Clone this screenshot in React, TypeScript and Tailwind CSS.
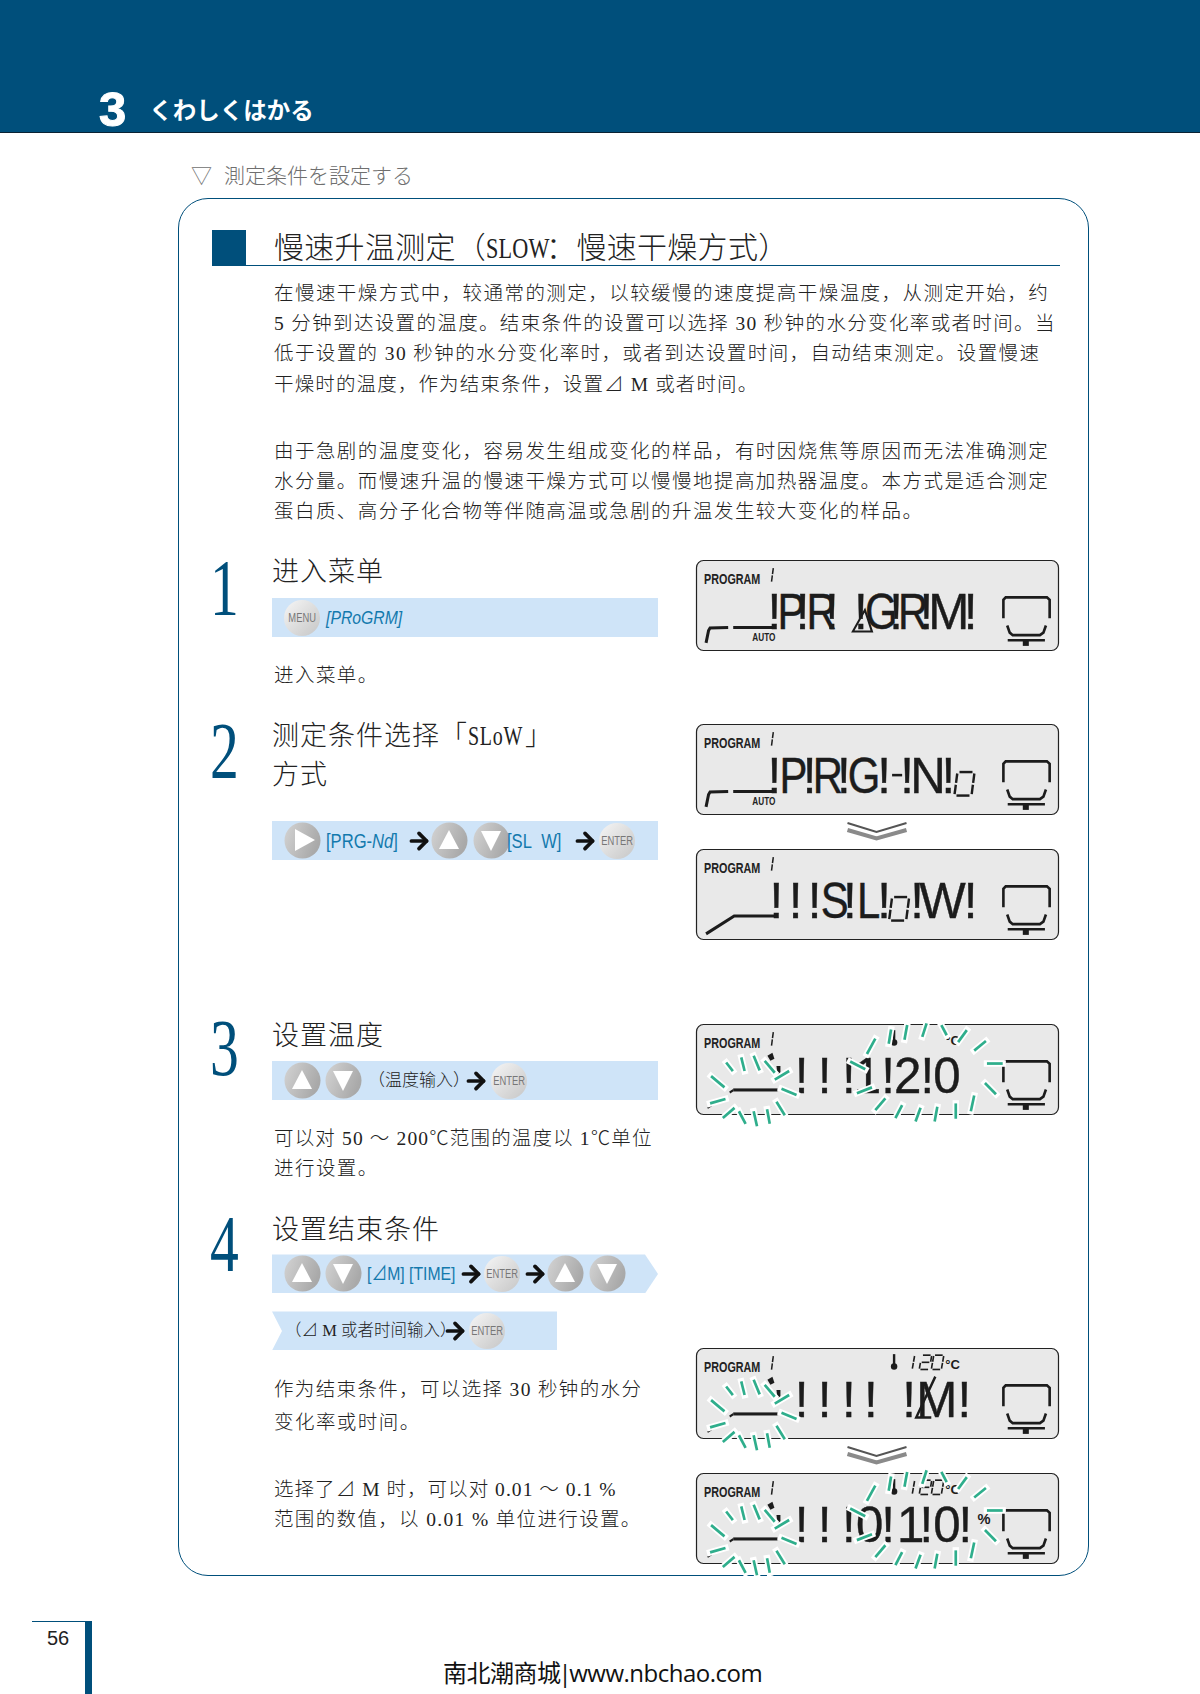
import type { ReactNode } from 'react'
import { ArrowRight } from 'lucide-react'

const SERIF = "[font-family:'Liberation_Serif','Noto_Sans_CJK_SC',serif]"
const SANS = "[font-family:'Liberation_Sans','Noto_Sans_CJK_SC',sans-serif]"

// lines holding latin text run a little tighter, latin is half width in the print
type Line = { t: string; c?: string }

const INTRO_1: Line[] = [
  { t: '在慢速干燥方式中，较通常的测定，以较缓慢的速度提高干燥温度，从测定开始，约' },
  { t: '5 分钟到达设置的温度。结束条件的设置可以选择 30 秒钟的水分变化率或者时间。当', c: 'tracking-[1.35px]' },
  { t: '低于设置的 30 秒钟的水分变化率时，或者到达设置时间，自动结束测定。设置慢速', c: 'tracking-[1.4px]' },
  { t: '干燥时的温度，作为结束条件，设置⊿ M 或者时间。', c: 'tracking-[1.13px]' },
]
const INTRO_2: Line[] = [
  { t: '由于急剧的温度变化，容易发生组成变化的样品，有时因烧焦等原因而无法准确测定' },
  { t: '水分量。而慢速升温的慢速干燥方式可以慢慢地提高加热器温度。本方式是适合测定' },
  { t: '蛋白质、高分子化合物等伴随高温或急剧的升温发生较大变化的样品。' },
]

// tick marks of the flashing areas, in 3x zoom units relative to the lcd box
const BURST_LEFT = [
  [45, 153, 85, 186], [90, 113, 110, 138], [135, 98, 145, 138], [172, 93, 190, 136], [205, 108, 235, 143],
  [235, 163, 278, 138], [255, 190, 300, 208], [240, 228, 265, 268], [212, 250, 220, 293], [172, 256, 182, 300],
  [128, 256, 148, 293], [80, 276, 115, 246], [42, 233, 88, 220],
]
const BURST_RIGHT = [
  [510, 88, 535, 43], [575, 58, 582, 16], [622, 46, 630, 3], [675, 38, 688, -2], [732, 3, 748, 33],
  [782, 53, 808, 18], [830, 78, 865, 50], [868, 116, 915, 116], [862, 173, 895, 206], [820, 256, 830, 210],
  [775, 233, 775, 278], [712, 286, 720, 243], [655, 286, 670, 246], [595, 276, 615, 238], [535, 253, 565, 218],
  [480, 203, 525, 186], [505, 133, 460, 110],
]

function Seg({ x, y, w, h, sk = 2.5, on, sw = 1.6 }: { x: number; y: number; w: number; h: number; sk?: number; on: string; sw?: number }) {
  const p = (u: number, v: number) => [x + u * w + (1 - v) * sk, y + v * h]
  const defs: Record<string, number[]> = {
    a: [0.12, 0, 0.88, 0],
    b: [1, 0.06, 1, 0.46],
    c: [1, 0.54, 1, 0.94],
    d: [0.12, 1, 0.88, 1],
    e: [0, 0.54, 0, 0.94],
    f: [0, 0.06, 0, 0.46],
    g: [0.12, 0.5, 0.88, 0.5],
  }
  return (
    <g stroke="#1c1c1c" strokeWidth={sw}>
      {on.split('').map(s => {
        const d = defs[s]
        const [x1, y1] = p(d[0], d[1])
        const [x2, y2] = p(d[2], d[3])
        return <line key={s} x1={x1} y1={y1} x2={x2} y2={y2} />
      })}
    </g>
  )
}

function Burst({ ticks, dy = 0 }: { ticks: number[][]; dy?: number }) {
  return (
    <g transform={`translate(0 ${dy}) scale(${1 / 3})`}>
      {ticks.map((t, i) => (
        <line key={`h${i}`} x1={t[0]} y1={t[1]} x2={t[2]} y2={t[3]} stroke="#fff" strokeWidth={19} strokeLinecap="square" />
      ))}
      {ticks.map((t, i) => (
        <line key={`t${i}`} x1={t[0]} y1={t[1]} x2={t[2]} y2={t[3]} stroke="#2fae8c" strokeWidth={8} />
      ))}
    </g>
  )
}

function Lcd({
  dots,
  letters,
  ramp,
  auto,
  children,
}: {
  dots: number[]
  letters: [string, number][]
  ramp: 'steps' | 'slope' | 'flash'
  auto?: boolean
  children?: ReactNode
}) {
  return (
    <svg width={363} height={91} viewBox="0 0 361 89" preserveAspectRatio="none" className={`block overflow-visible ${SANS}`}>
      <rect x={0.5} y={0.5} width={360} height={88} rx={7} fill="#e9e9e9" stroke="#222" strokeWidth={1.2} />
      <text x={8} y={23} fontSize={14} fontWeight={700} fill="#222" textLength={56} lengthAdjust="spacingAndGlyphs">
        PROGRAM
      </text>
      <Seg x={75} y={7} w={0} h={15} sk={2} on="bc" sw={1.5} />
      {auto && (
        <text x={56} y={79} fontSize={11} fontWeight={700} fill="#222" textLength={23} lengthAdjust="spacingAndGlyphs">
          AUTO
        </text>
      )}
      {ramp === 'steps' && (
        <g stroke="#1c1c1c" strokeWidth={3} fill="none">
          <path d="M10 81 L12.5 69 L14 66.5 L32 66" />
          <line x1={37} y1={66} x2={78} y2={66} />
        </g>
      )}
      {ramp === 'slope' && (
        <path d="M10 83 L38 65.5 L78 65.5" stroke="#1c1c1c" strokeWidth={3} fill="none" />
      )}
      {ramp === 'flash' && (
        <g fill="#1c1c1c">
          <rect x={37} y={63} width={44} height={3} />
          <path d="M33 66 L37 63.5 L37 66 L34 68 Z" />
          <path d="M11 82 L17 78 L18 79 L12 83 Z" />
          <path d="M71 31 L76 28 L78 34 L74 36 Z" />
          <path d="M80 41 L84 41 L84 50 L81 50 Z" />
        </g>
      )}
      <g fill="#1c1c1c" stroke="#1c1c1c" strokeWidth={0.4} fontSize={49}>
        {dots.map(x => (
          <text key={`d${x}`} x={x} y={67} textAnchor="middle">
            !
          </text>
        ))}
        {letters.map(([c, x]) => (
          <text key={`${c}${x}`} transform={`translate(${x} 67) scale(${'PRGSL'.includes(c) ? 0.85 : 1} 1)`}>
            {c}
          </text>
        ))}
      </g>
      <g stroke="#1c1c1c" strokeWidth={2.6} fill="none">
        <path d="M305.7 57 L305.7 39 L308 36.5 L349 36.5 L351.7 39 L351.7 57" />
        <path d="M309.5 64 L312 71 L315 73.5 L342 73.5 L345.5 71 L348 64" />
        <line x1={310} y1={78.5} x2={347} y2={78.5} />
      </g>
      <rect x={325} y={79} width={6} height={5} fill="#1c1c1c" />
      {children}
    </svg>
  )
}

function Temp({ digits = true }: { digits?: boolean }) {
  return (
    <g>
      <line x1={197} y1={6} x2={197} y2={17} stroke="#1c1c1c" strokeWidth={2.4} />
      <circle cx={197} cy={18} r={3.2} fill="#1c1c1c" />
      {digits && (
        <>
          <Seg x={215} y={7} w={0} h={14} sk={2.5} on="bc" />
          <Seg x={222} y={7} w={10} h={14} sk={2.5} on="abged" />
          <Seg x={234} y={7} w={10} h={14} sk={2.5} on="abcdef" />
        </>
      )}
      <text x={248} y={21} fontSize={13} fontWeight={700} fill="#1c1c1c">
        °C
      </text>
    </g>
  )
}

function Chevron() {
  return (
    <svg width={62} height={20} viewBox="0 0 61 20" className="block">
      <path d="M1 1 L30 10 L60 1" stroke="#555" strokeWidth={2} fill="none" />
      <path d="M1 8 L30 16.5 L60 8" stroke="#8a8a8a" strokeWidth={4} fill="none" />
    </svg>
  )
}

function TriButton({ dir }: { dir: 'up' | 'down' | 'right' }) {
  const pts = dir === 'up' ? '18,8 28,27 8,27' : dir === 'down' ? '8,9 28,9 18,29' : '11,7 31,18 11,29'
  return (
    <svg width={37} height={37} viewBox="0 0 37 37" className="block shrink-0 overflow-visible">
      <defs>
        <linearGradient id={`tb-${dir}`} x1="0" y1="0" x2="1" y2="0.4">
          <stop offset="0" stopColor="#d4d4d4" />
          <stop offset="1" stopColor="#a9a9a9" />
        </linearGradient>
      </defs>
      <circle cx={18.5} cy={18.5} r={18} fill={`url(#tb-${dir})`} />
      <polygon points={pts} fill="#fff" />
    </svg>
  )
}

function LabelButton({ label }: { label: string }) {
  return (
    <span className={`flex h-[36px] w-[36px] shrink-0 items-center justify-center rounded-full bg-linear-to-br from-[#f6f6f6] to-[#c6c6c6] text-[13px] text-[#777] ${SANS}`}>
      <span className="inline-block scale-x-[0.72]">{label}</span>
    </span>
  )
}

function Arrow() {
  return <ArrowRight size={26} strokeWidth={3.4} className="-mx-[3px] shrink-0 text-[#111]" />
}

function Bar({ children, className = '' }: { children: ReactNode; className?: string }) {
  return <div className={`flex h-[39px] items-center bg-[#cfe4f8] pl-[12px] ${className}`}>{children}</div>
}

function KeyText({ children, className = '', size = 'text-[19px]' }: { children: ReactNode; className?: string; size?: string }) {
  return (
    <span className={`shrink-0 whitespace-nowrap text-[#1379ad] ${size} ${SANS} ${className}`}>
      <span className="inline-block origin-left scale-x-[0.83]">{children}</span>
    </span>
  )
}

// latin letters in the print are half width, squeezed into a fixed box
function Narrow({ children, className }: { children: ReactNode; className: string }) {
  return (
    <span className={`inline-block whitespace-nowrap ${className}`}>
      <span className="inline-block origin-left scale-x-[0.74]">{children}</span>
    </span>
  )
}

function Step({
  num,
  numClass,
  rowClass,
  titleClass,
  title,
  left,
  right,
  rightClass,
}: {
  num: string
  numClass: string
  rowClass: string
  titleClass: string
  title: ReactNode[]
  left: ReactNode
  right?: ReactNode
  rightClass: string
}) {
  return (
    <div className={`flex ${rowClass}`}>
      <div className="ml-[31px] w-[62px] shrink-0">
        <div className={`origin-top-left scale-x-[0.72] text-[80px] leading-[80px] text-[#004f7b] ${SERIF} ${numClass}`}>{num}</div>
      </div>
      <div className="w-[386px] shrink-0">
        <div className={titleClass}>
          {title.map((t, i) => (
            <div key={i} className={`whitespace-nowrap text-[27px] leading-[39px] font-light tracking-[1px] text-[#222] ${SERIF}`}>
              {t}
            </div>
          ))}
        </div>
        {left}
      </div>
      <div className={`ml-[38px] w-[361px] shrink-0 ${rightClass}`}>{right}</div>
    </div>
  )
}

function Copy({ lines, leading = 'leading-[30px]', className = '' }: { lines: Line[]; leading?: string; className?: string }) {
  return (
    <div className={`ml-[2px] text-[19.5px] font-light text-[#222] ${leading} ${SERIF} ${className}`}>
      {lines.map(l => (
        <div key={l.t} className={`whitespace-nowrap ${l.c ?? 'tracking-[1.45px]'}`}>
          {l.t}
        </div>
      ))}
    </div>
  )
}

export default function App() {
  return (
    <div className="h-[1694px] w-[1200px] overflow-hidden bg-white">
      {/* chapter band */}
      <div className="flex h-[133px] items-end border-b border-[#0b2233] bg-[#004f7b] pb-[1px] pl-[99px] text-white">
        <span className={`text-[49px] leading-[44px] font-bold [-webkit-text-stroke:1px_white] ${SANS}`}>3</span>
        <span className="mb-[7px] ml-[23px] text-[23.5px] leading-[30px] font-bold [font-family:'Noto_Sans_CJK_JP',sans-serif]">
          くわしくはかる
        </span>
      </div>

      <div className="ml-[191px] mt-[27px] flex h-[30px] items-center text-[21px] font-light text-[#6f6f6f] [font-family:'Noto_Sans_CJK_JP',sans-serif]">
        <span className="w-[33px]">▽</span>
        <span>測定条件を設定する</span>
      </div>

      <div className="ml-[178px] mt-[8px] h-[1378px] w-[911px] rounded-[30px] border border-[#004f7b] pt-[31px]">
        <div className="ml-[33px] flex h-[36px] w-[848px] items-center border-b border-[#004f7b]">
          <div className="h-[35px] w-[34px] bg-[#004f7b]" />
          <div className={`ml-[28px] whitespace-nowrap text-[30px] font-light tracking-[0.3px] text-[#222] ${SERIF}`}>
            慢速升温测定（<Narrow className="w-[60px]">SLOW</Narrow>：慢速干燥方式）
          </div>
        </div>

        <div className="ml-[93px] mt-[13px]">
          <Copy lines={INTRO_1} leading="leading-[30.2px]" />
          <Copy lines={INTRO_2} className="mt-[37px]" leading="leading-[30.2px]" />
        </div>

        <div className="mt-[24px]">
          <Step
            num="1"
            numClass="-mt-[3px]"
            rowClass="h-[164px]"
            titleClass="pt-[2px]"
            rightClass="pt-[9px]"
            title={['进入菜单']}
            left={
              <>
                <Bar className="mt-[6px]">
                  <LabelButton label="MENU" />
                  <KeyText className="ml-[6px] italic font-light">[PRoGRM]</KeyText>
                </Bar>
                <Copy lines={[{ t: '进入菜单。' }]} className="mt-[24px]" />
              </>
            }
            right={
              <Lcd
                ramp="steps"
                auto
                dots={[78, 106, 135, 164, 199, 229, 273]}
                letters={[['P', 81], ['R', 110], ['G', 168], ['R', 201], ['M', 231]]}
              >
                <polygon points="168,49 156,70 175,70" fill="none" stroke="#1c1c1c" strokeWidth={2} />
              </Lcd>
            }
          />
          <Step
            num="2"
            numClass="-mt-[4px]"
            rowClass="h-[301px]"
            titleClass="pt-[2px]"
            rightClass="pt-[9px]"
            title={[
              <>
                测定条件选择「<Narrow className="w-[57px]">SLoW</Narrow>」
              </>,
              '方式',
            ]}
            left={
              <Bar className="mt-[26px]">
                <TriButton dir="right" />
                <KeyText size="text-[20px]" className="ml-[5px] w-[74px]">
                  [PRG-<span className="italic font-light">Nd</span>]
                </KeyText>
                <span className="ml-[9px]">
                  <Arrow />
                </span>
                <span className="ml-[2px]">
                  <TriButton dir="up" />
                </span>
                <span className="ml-[5px]">
                  <TriButton dir="down" />
                </span>
                <KeyText size="text-[20px]" className="-ml-[3px] w-[68px]">[SL&nbsp;&nbsp;W]</KeyText>
                <Arrow />
                <span className="ml-[4px]">
                  <LabelButton label="ENTER" />
                </span>
              </Bar>
            }
            right={
              <div className="flex flex-col">
                <Lcd
                  ramp="steps"
                  auto
                  dots={[78, 113, 147, 187, 210, 251]}
                  letters={[['P', 83], ['R', 116], ['G', 151], ['N', 213]]}
                >
                  <line x1={195} y1={50} x2={205} y2={50} stroke="#1c1c1c" strokeWidth={2.5} />
                  <Seg x={257} y={47} w={17} h={23} sk={3} on="abcdef" sw={2.4} />
                </Lcd>
                <div className="mt-[7px] ml-[150px] h-[27px]">
                  <Chevron />
                </div>
                <Lcd
                  ramp="slope"
                  dots={[80, 99, 118, 153, 187, 220, 273]}
                  letters={[['S', 124], ['L', 160], ['W', 222]]}
                >
                  <Seg x={192} y={47} w={17} h={23} sk={3} on="abcdef" sw={2.4} />
                </Lcd>
              </div>
            }
          />
          <Step
            num="3"
            numClass="-mt-[8px]"
            rowClass="h-[193px]"
            titleClass="pt-[1px]"
            rightClass="pt-[8px]"
            title={['设置温度']}
            left={
              <>
                <Bar className="mt-[5px]">
                  <TriButton dir="up" />
                  <span className="ml-[4px]">
                    <TriButton dir="down" />
                  </span>
                  <span className={`ml-[6px] w-[97px] whitespace-nowrap text-[17px] font-light text-[#222] ${SERIF}`}>（温度输入）</span>
                  <span className="ml-[1px]">
                    <Arrow />
                  </span>
                  <span className="ml-[5px]">
                    <LabelButton label="ENTER" />
                  </span>
                </Bar>
                <Copy
                  lines={[{ t: '可以对 50 ～ 200℃范围的温度以 1℃单位', c: 'tracking-[1.15px]' }, { t: '进行设置。' }]}
                  className="mt-[24px]"
                />
              </>
            }
            right={
              <Lcd
                ramp="flash"
                dots={[105, 128, 152, 191, 230]}
                letters={[['1', 157], ['2', 197], ['0', 236]]}
              >
                <Temp digits={false} />
                <Burst ticks={BURST_LEFT} />
                <Burst ticks={BURST_RIGHT} />
              </Lcd>
            }
          />
          <Step
            num="4"
            numClass="-mt-[5px]"
            rowClass="h-[365px]"
            titleClass="pt-[2px]"
            rightClass="pt-[139px]"
            title={['设置结束条件']}
            left={
              <>
                <Bar className="mt-[4px] [clip-path:polygon(0_0,373px_0,100%_50%,373px_100%,0_100%)]">
                  <TriButton dir="up" />
                  <span className="ml-[4px]">
                    <TriButton dir="down" />
                  </span>
                  <KeyText className="ml-[5px] w-[88px]">[⊿M] [TIME]</KeyText>
                  <span className="ml-[6px]">
                    <Arrow />
                  </span>
                  <span className="ml-[3px]">
                    <LabelButton label="ENTER" />
                  </span>
                  <span className="ml-[5px]">
                    <Arrow />
                  </span>
                  <span className="ml-[2px]">
                    <TriButton dir="up" />
                  </span>
                  <span className="ml-[5px]">
                    <TriButton dir="down" />
                  </span>
                </Bar>
                <Bar className="mt-[18px] w-[285px] [clip-path:polygon(0_0,100%_0,100%_100%,0_100%,10px_50%)]">
                  <span className={`ml-[1px] w-[160px] whitespace-nowrap text-[16.5px] font-light text-[#222] ${SERIF}`}>（⊿ M 或者时间输入）</span>
                  <Arrow />
                  <span className="ml-[4px]">
                    <LabelButton label="ENTER" />
                  </span>
                </Bar>
                <Copy
                  lines={[{ t: '作为结束条件，可以选择 30 秒钟的水分', c: 'tracking-[1.35px]' }, { t: '变化率或时间。' }]}
                  leading="leading-[33px]"
                  className="mt-[23px]"
                />
                <Copy
                  lines={[
                    { t: '选择了⊿ M 时，可以对 0.01 ～ 0.1 %', c: 'tracking-[1.05px]' },
                    { t: '范围的数值，以 0.01 % 单位进行设置。', c: 'tracking-[1.35px]' },
                  ]}
                  className="mt-[36px]"
                />
              </>
            }
            right={
              <div className="flex flex-col">
                <Lcd ramp="flash" dots={[105, 128, 152, 174, 212, 267]} letters={[['M', 219]]}>
                  <Temp />
                  <path d="M238 28 L219 68 L234 68" fill="none" stroke="#1c1c1c" strokeWidth={2.4} />
                  <Burst ticks={BURST_LEFT} />
                </Lcd>
                <div className="mt-[7px] ml-[150px] h-[27px]">
                  <Chevron />
                </div>
                <Lcd
                  ramp="flash"
                  dots={[105, 128, 152, 191, 229, 268]}
                  letters={[['0', 159], ['1', 200], ['0', 236]]}
                >
                  <Temp />
                  <text x={280} y={50} fontSize={15} fontWeight={700} fill="#1c1c1c" textLength={13} lengthAdjust="spacingAndGlyphs">
                    %
                  </text>
                  <Burst ticks={BURST_LEFT} />
                  <Burst ticks={BURST_RIGHT} dy={-2} />
                </Lcd>
              </div>
            }
          />
        </div>
      </div>

      {/* page number and watermark */}
      <div className="ml-[32px] mt-[45px] flex">
        <div className={`h-[73px] w-[60px] border-t border-r-[7px] border-[#004f7b] pl-[15px] pt-[2px] text-[20px] leading-[28px] text-[#222] ${SANS}`}>
          56
        </div>
        <div className="ml-[351px] mt-[35px] whitespace-nowrap text-[24px] leading-[34px] tracking-[-0.5px] text-[#111] [font-family:'Open_Sans','Noto_Sans_CJK_SC',sans-serif]">
          南北潮商城<span className="-mx-[2px]">|</span>www.nbchao.com
        </div>
      </div>
    </div>
  )
}
